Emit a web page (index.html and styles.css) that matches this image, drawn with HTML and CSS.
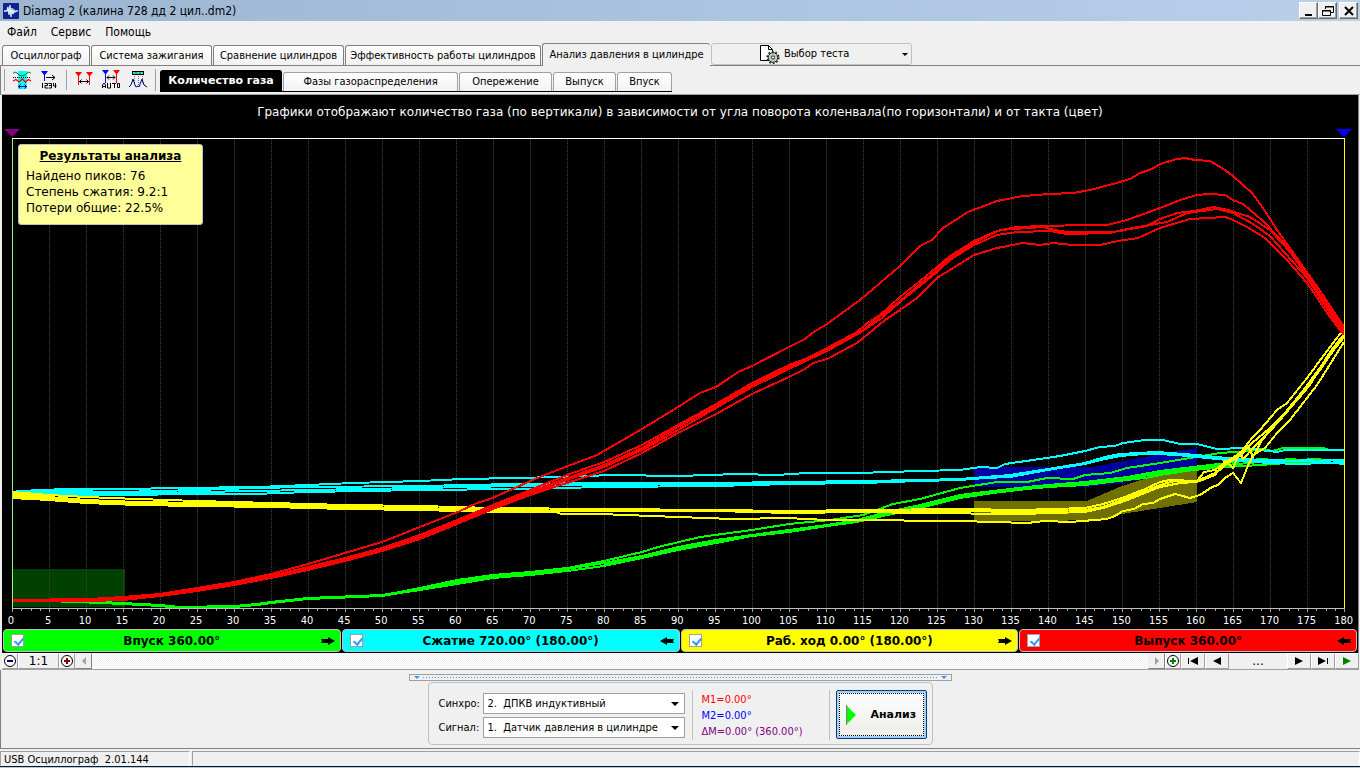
FILE: index.html
```html
<!DOCTYPE html>
<html lang="ru">
<head>
<meta charset="utf-8">
<title>Diamag 2 (калина 728 дд 2 цил..dm2)</title>
<link rel="stylesheet" href="styles.css">
</head>
<body>
<header class="titlebar">
  <svg class="app-icon" viewBox="0 0 16 16" width="16" height="16" aria-hidden="true"><rect width="16" height="16" rx="1" fill="#10248c"/><path d="M1 8h3l1-4 1 8 1-10 1 12 1-9 1 6 1-4 1 2 1-1h2" fill="none" stroke="#d6ecff" stroke-width="1.3"/></svg>
  <h1 class="title">Diamag 2 (калина 728 дд 2 цил..dm2)</h1>
  <div class="win-buttons">
    <button class="win-btn" aria-label="Свернуть"><svg viewBox="0 0 14 12" width="14" height="12"><path d="M3 9h7v2H3z"/></svg></button>
    <button class="win-btn" aria-label="Восстановить"><svg viewBox="0 0 14 12" width="14" height="12" fill="none" stroke="#000"><path d="M4.500 4V1.500h8v6H10M4 2h9M1.500 5.500h8v5h-8zM1 6h9"/></svg></button>
    <button class="win-btn win-close" aria-label="Закрыть"><svg viewBox="0 0 14 12" width="14" height="12"><path d="M3 2l8 8M11 2l-8 8" stroke="#000" stroke-width="2"/></svg></button>
  </div>
</header>

<nav class="menu">
  <button class="menu-item">Файл</button>
  <button class="menu-item">Сервис</button>
  <button class="menu-item">Помощь</button>
</nav>

<nav class="tabs" aria-label="Режимы">
  <button class="tab tab-s">Осциллограф</button>
  <button class="tab tab-m">Система зажигания</button>
  <button class="tab tab-l">Сравнение цилиндров</button>
  <button class="tab tab-xl">Эффективность работы цилиндров</button>
  <button class="tab tab-active">Анализ давления в цилиндре</button>
  <button class="test-picker">
    <svg viewBox="0 0 21 20" width="21" height="20" aria-hidden="true"><path d="M1.500 1.500h8l4 4v11h-12z" fill="#fff" stroke="#000"/><path d="M9.500 1.500v4h4" fill="none" stroke="#000"/><circle cx="14" cy="13.500" r="4.800" fill="#bccfbc" stroke="#222"/><circle cx="14" cy="13.500" r="5.800" fill="none" stroke="#222" stroke-width="1.600" stroke-dasharray="1.800 1.840"/><circle cx="14" cy="13.500" r="1.600" fill="#fff" stroke="#222"/></svg>
    <span>Выбор теста</span>
    <i class="caret"></i>
  </button>
</nav>

<div class="toolbar">
  <div class="tools">
    <button class="tool" aria-label="Наложение"><svg viewBox="0 0 20 20" width="20" height="20"><path d="M6 1h9v18H6z" fill="#0ff"/><path d="M1 3.500l2-1.500 2 1 2 2 3 1 3-1 2-2 2-1 2 1.500" fill="none" stroke="#008000"/><path d="M1 7.500h18" stroke="#000" stroke-dasharray="1 1"/><path d="M1 11l3-1.500 3 2.500 3.500-3 3 3 3-2.500 2.500 1.500" fill="none" stroke="red" stroke-width="1.300"/><path d="M6 16.500h9M8.500 14.500l-2 2 2 2M12.500 14.500l2 2-2 2" stroke="#000080" fill="none"/></svg></button>
    <button class="tool" aria-label="Нумерация"><svg viewBox="0 0 20 20" width="20" height="20"><path d="M2 1h7L6 5v6H5V5z" fill="#00f"/><path d="M7 7.500h9M13 5l3 2.500L13 10" fill="none" stroke="#000"/><path d="M3.500 13v5M5.500 13.500h3v2h-2.500v2.500h3M9.500 13.500h3v4.500h-3M10 15.500h2M14.500 13v3h3M16.500 13v5" fill="none" stroke="#000"/></svg></button>
    <button class="tool tool-sep" aria-label="Маркеры"><svg viewBox="0 0 20 20" width="20" height="20"><path d="M1 2h7L5 6v9H4V6zM12 2h7l-3 4v9h-1V6z" fill="red"/><path d="M4.500 5v10M15.500 5v10" stroke="red"/><path d="M5 11.500h10M7.500 9.500l-2 2 2 2M12.500 9.500l2 2-2 2" fill="none" stroke="#000"/></svg></button>
    <button class="tool" aria-label="Автоматические маркеры"><svg viewBox="0 0 20 20" width="20" height="20"><path d="M1 0h7L5 4v9H4V4z" fill="#00f"/><path d="M12 0h7l-3 4v9h-1V4z" fill="red"/><path d="M6 7.500h8M8 5.500l-2 2 2 2M12 5.500l2 2-2 2M1.500 18v-3l1.500-2 1.500 2v3M1.500 16.500h3M6.500 13v5h3v-5M11 13.500h4M13.500 13.500V18M16.500 13.500h2v4h-2z" fill="none" stroke="#000"/></svg></button>
    <button class="tool" aria-label="Результаты"><svg viewBox="0 0 20 20" width="20" height="20"><path d="M4 1h12v4H4z"/><path d="M5 2h10v2H5z" fill="#0fc"/><path d="M8 2v2M12 2v2" stroke="red"/><path d="M6.500 6v7M10.500 6v10M14.500 6v7" stroke="#777" stroke-dasharray="1 1"/><path d="M1 17l2-2 2-6 2 6 1 2 2-1 1 1 3-8 2 6 3 2" fill="none" stroke="#000080"/></svg></button>
  </div>
  <nav class="subtabs" aria-label="Графики">
    <button class="subtab subtab-active">Количество газа</button>
    <button class="subtab sub-l">Фазы газораспределения</button>
    <button class="subtab sub-m">Опережение</button>
    <button class="subtab sub-s">Выпуск</button>
    <button class="subtab sub-xs">Впуск</button>
  </nav>
</div>

<main class="chart">
  <p class="caption">Графики отображают количество газа (по вертикали) в зависимости от угла поворота коленвала(по горизонтали) и от такта (цвет)</p>
  <div class="markers"><i class="marker marker-a"></i><i class="marker marker-b"></i></div>
  <div class="plot">
    <svg class="plot-svg" viewBox="12 138 1333 474" preserveAspectRatio="none" role="img" aria-label="Количество газа по углу поворота">
      <g class="zones">
        <path fill="#004000" d="M12 569H125V607H12z"/>
      </g>
      <path class="grid" d="M49.500 139V608M86.500 139V608M123.500 139V608M160.500 139V608M197.500 139V608M234.500 139V608M271.500 139V608M308.500 139V608M345.500 139V608M382.500 139V608M419.500 139V608M456.500 139V608M493.500 139V608M530.500 139V608M567.500 139V608M604.500 139V608M641.500 139V608M678.500 139V608M715.500 139V608M752.500 139V608M789.500 139V608M826.500 139V608M863.500 139V608M900.500 139V608M937.500 139V608M974.500 139V608M1011.500 139V608M1048.500 139V608M1085.500 139V608M1122.500 139V608M1159.500 139V608M1196.500 139V608M1233.500 139V608M1270.500 139V608M1307.500 139V608"/>
      <g class="zones">
        <path fill="#0000a0" d="M974 467H1093L1140 458L1173 452L1197 448V470L1160 476L1122 483L1087 487H974z"/>
        <path fill="#707000" d="M974 501H1087L1122 486L1160 474L1197 470V502L1160 508L1122 514L1100 520L974 522z"/>
      </g>
      <g class="curve" stroke="#00ff00">
        <polyline points="12,600 77,601 123,603 160,605 180,607 234,606 257,604 271,602 308,598 382,595 400,592 420,588 457,580 493,575 530,572 567,568 604,561 642,552 658,547 700,537 752,530 789,524 830,520 863,515 893,504 920,499 960,488 997,482 1027,482 1047,478 1073,479 1085,475 1110,473 1127,468 1160,463 1190,458 1220,453 1250,451 1260,449 1273,451 1283,448 1323,448 1330,450 1344,450"/>
        <polyline points="12,601 77,601 123,603 160,605 180,607 234,607 257,604 271,602 308,598 382,596 400,592 420,589 457,582 493,576 530,573 567,569 604,563 642,556 678,547 716,540 752,535 789,530 827,525 857,520 883,513 920,505 960,495 993,491 1027,487 1048,485 1085,482 1127,477 1160,471 1193,467 1227,463 1260,459 1290,461 1313,459 1344,461"/>
        <polyline points="12,600 77,602 123,604 160,606 180,608 234,607 257,605 271,603 308,599 382,596 400,593 420,590 457,584 493,578 530,575 567,571 604,566 642,558 678,550 716,543 752,536 789,532 827,526 857,522 883,516 920,508 960,498 993,493 1027,489 1048,487 1085,485 1127,480 1145,478 1160,475 1193,470 1227,467 1260,465 1300,462 1344,463"/>
        <polyline points="604,565 642,557 678,549 716,542 752,535 789,531 827,526 857,521 883,515 920,506 960,497 1027,488 1085,484 1127,479 1160,473 1193,468 1227,465 1260,462 1290,459 1344,464"/>
      </g>
      <g class="curve" stroke="#00ffff">
        <polyline points="12,492 20,491 65,489 120,489 183,488 257,487 308,485 353,483 420,481 463,479 515,478 560,477 613,475 678,476 738,474 777,475 807,473 857,473 920,471 960,470 980,467 997,468 1005,464 1033,460 1060,456 1085,451 1100,447 1115,446 1123,443 1145,440 1163,440 1180,444 1197,444 1217,449 1243,448 1277,452 1285,450 1344,450"/>
        <polyline points="12,493 65,491 120,492 197,490 254,488 308,487 420,486 515,484 604,483 716,483 789,482 863,481 920,480 960,479 985,477 1010,475 1048,469 1085,463 1105,457 1120,454 1157,452 1197,455 1237,459 1270,460 1300,461 1344,460"/>
        <polyline points="12,494 65,493 120,494 197,492 254,491 308,490 420,488 515,486 604,485 716,484 789,483 863,482 920,481 960,480 985,478 1010,477 1048,470 1085,464 1105,459 1120,456 1157,453 1197,457 1237,461 1270,463 1300,464 1344,462"/>
        <polyline points="12,495 65,495 120,495 197,494 254,494 308,492 420,490 515,489 604,487 716,486 789,484 863,483 920,481 960,479 1010,476 1048,470 1085,463 1120,455 1157,454 1197,456 1237,460 1270,462 1310,460 1344,464"/>
      </g>
      <g class="curve" stroke="#ffff00">
        <polyline points="12,492 49,495 86,497 138,499 197,501 271,503 345,505 420,506 493,508 604,509 716,510 789,511 863,510 960,509 1020,510 1085,508 1103,504 1122,498 1145,489 1160,482 1170,480 1197,481 1204,472 1215,470 1226,462 1240,453 1252,438 1260,430 1277,410 1287,403 1307,378 1330,347 1343,330"/>
        <polyline points="12,494 49,497 86,500 138,502 197,503 271,505 345,507 420,508 493,510 604,511 716,511 789,512 863,512 960,511 1020,512 1085,510 1103,507 1122,500 1145,491 1160,485 1175,481 1197,481 1215,473 1226,464 1240,456 1252,443 1270,428 1300,397 1320,370 1344,335"/>
        <polyline points="12,496 49,499 86,502 138,504 197,505 271,507 345,508 420,510 493,511 604,511 716,511 789,513 863,512 920,513 1020,514 1085,512 1103,508 1122,502 1145,493 1160,487 1180,483 1197,482 1215,475 1225,461 1233,468 1240,452 1243,459 1255,446 1275,425 1302,392 1322,365 1344,337"/>
        <polyline points="12,498 49,500 86,503 138,505 197,506 271,507 345,509 420,510 493,512 555,512 562,514 600,514 678,517 733,519 787,518 827,520 887,520 920,521 960,521 1027,523 1045,521 1070,522 1107,519 1115,516 1123,511 1134,509 1143,504 1153,503 1160,499 1175,494 1190,498 1200,495 1212,487 1218,485 1225,478 1233,473 1241,483 1247,468 1253,455 1265,448 1277,433 1290,420 1300,407 1317,385 1344,342"/>
        <polyline points="1197,481 1215,474 1230,461 1248,446 1253,457 1262,440 1280,420 1310,385 1330,352 1344,334"/>
      </g>
      <g class="curve" stroke="#ff0000">
        <polyline points="12,600 90,599 123,597 160,594 197,588 234,582 271,574 308,564 345,553 382,542 420,527 460,511 477,503 490,499 508,491 535,479 560,469 597,455 642,429 678,407 700,393 716,387 728,379 738,372 752,366 789,347 805,339 812,333 827,324 860,300 900,266 920,246 932,240 943,228 968,212 997,201 1023,196 1050,194 1073,193 1090,190 1113,184 1130,179 1140,173 1152,169 1160,164 1177,159 1185,158 1195,160 1210,161 1222,168 1233,176 1252,193 1263,208 1277,230 1297,258 1323,295 1344,327"/>
        <polyline points="12,600 90,600 123,598 160,595 197,589 234,583 271,576 308,567 345,558 382,548 420,535 457,520 493,505 530,490 567,475 604,462 642,445 678,425 716,404 752,383 789,365 805,359 827,348 857,332 866,324 880,315 900,297 920,281 937,267 950,256 974,241 997,231 1017,227 1043,226 1087,225 1107,225 1127,220 1160,208 1183,199 1197,195 1210,194 1225,195 1233,200 1243,204 1263,221 1283,242 1300,265 1344,330"/>
        <polyline points="12,600 90,600 123,598 160,595 197,590 234,584 271,577 308,568 345,559 382,549 420,537 457,522 493,507 530,492 567,478 604,465 642,448 678,427 716,406 752,385 789,367 827,350 863,330 883,314 900,301 920,284 937,270 950,258 974,243 1000,230 1043,227 1055,230 1067,232 1113,232 1147,226 1160,219 1177,213 1195,211 1213,207 1228,210 1250,217 1270,230 1290,252 1307,276 1344,332"/>
        <polyline points="12,601 90,601 123,599 160,596 197,590 234,584 271,577 308,569 345,560 382,550 420,538 457,523 493,508 530,494 567,480 604,467 642,450 678,430 716,408 752,387 789,369 827,351 863,331 883,317 900,302 920,286 937,272 950,260 974,245 997,235 1017,232 1050,231 1067,234 1110,233 1127,229 1167,222 1187,213 1217,209 1233,213 1253,224 1270,236 1307,278 1344,335"/>
        <polyline points="12,601 90,601 123,600 160,596 197,591 234,585 271,578 308,570 345,561 382,551 420,539 457,524 493,509 530,495 567,483 604,471 642,453 678,433 716,414 752,394 789,377 805,369 813,363 827,359 857,343 885,320 900,310 917,298 937,278 974,255 997,248 1023,243 1040,245 1053,243 1073,245 1100,245 1118,241 1138,238 1160,228 1190,219 1225,217 1233,220 1247,227 1265,238 1287,260 1307,283 1330,317 1342,333"/>
      </g>
      <path stroke="#fff" d="M12 138.500H1345"/>
      <path stroke="#80ff80" d="M12.500 139V608"/>
      <path stroke="#ffff00" d="M1344.500 139V608"/>
      <path stroke="#c0c0c0" d="M12 608.500H1345"/>
      <path stroke="#a0a0a0" stroke-width="2" stroke-dasharray="1 8.250" d="M12 610H1345"/>
      <path stroke="#a0a0a0" stroke-width="3" stroke-dasharray="1 36" d="M12 610.500H1345"/>
    </svg>
    <section class="results">
      <h2>Результаты анализа</h2>
      <p>Найдено пиков: 76</p>
      <p>Степень сжатия: 9.2:1</p>
      <p>Потери общие: 22.5%</p>
    </section>
  </div>
  <div class="axis">
    <span>0</span><span>5</span><span>10</span><span>15</span><span>20</span><span>25</span><span>30</span><span>35</span><span>40</span><span>45</span><span>50</span><span>55</span><span>60</span><span>65</span><span>70</span><span>75</span><span>80</span><span>85</span><span>90</span><span>95</span><span>100</span><span>105</span><span>110</span><span>115</span><span>120</span><span>125</span><span>130</span><span>135</span><span>140</span><span>145</span><span>150</span><span>155</span><span>160</span><span>165</span><span>170</span><span>175</span><span>180</span>
  </div>
  <div class="strokes">
    <label class="stroke stroke-in"><input type="checkbox" checked><span>Впуск 360.00°</span><svg viewBox="0 0 16 10" width="16" height="10"><path d="M1 3h7V1l7 4-7 4V7H1l1-2z"/></svg></label>
    <label class="stroke stroke-comp"><input type="checkbox" checked><span>Сжатие 720.00° (180.00°)</span><svg viewBox="0 0 16 10" width="16" height="10"><path d="M15 3H8V1L1 5l7 4V7h7l-1-2z"/></svg></label>
    <label class="stroke stroke-work"><input type="checkbox" checked><span>Раб. ход 0.00° (180.00°)</span><svg viewBox="0 0 16 10" width="16" height="10"><path d="M1 3h7V1l7 4-7 4V7H1l1-2z"/></svg></label>
    <label class="stroke stroke-out"><input type="checkbox" checked><span>Выпуск 360.00°</span><svg viewBox="0 0 16 10" width="16" height="10"><path d="M15 3H8V1L1 5l7 4V7h7l-1-2z"/></svg></label>
  </div>
</main>

<div class="scroller">
  <button class="nav-btn nav-xs" aria-label="Уменьшить"><svg viewBox="0 0 14 14" width="14" height="14"><circle cx="7" cy="7" r="5.500" fill="#fff" stroke="#000"/><path d="M4 6h6v2H4z" fill="#000080"/></svg></button>
  <button class="nav-btn nav-scale">1:1</button>
  <button class="nav-btn nav-xs" aria-label="Увеличить"><svg viewBox="0 0 14 14" width="14" height="14"><circle cx="7" cy="7" r="5.500" fill="#fff" stroke="#000"/><path d="M4 6h2V4h2v2h2v2H8v2H6V8H4z" fill="#800000"/></svg></button>
  <button class="nav-btn nav-scroll" aria-label="Прокрутить влево"><svg viewBox="0 0 8 8" width="8" height="8"><path d="M6 0v8L2 4z" fill="#a0a0a0"/></svg></button>
  <div class="track"></div>
  <button class="nav-btn nav-scroll" aria-label="Прокрутить вправо"><svg viewBox="0 0 8 8" width="8" height="8"><path d="M2 0v8l4-4z" fill="#a0a0a0"/></svg></button>
  <button class="nav-btn nav-xs" aria-label="Добавить"><svg viewBox="0 0 14 14" width="14" height="14"><circle cx="7" cy="7" r="5.500" fill="#fff" stroke="#000"/><path d="M4 6h2V4h2v2h2v2H8v2H6V8H4z" fill="#008000"/></svg></button>
  <button class="nav-btn nav-m" aria-label="В начало"><svg viewBox="0 0 12 8" width="12" height="8"><path d="M1 1h1v6H1zM11 0v8L3 4z"/></svg></button>
  <button class="nav-btn nav-m" aria-label="Назад"><svg viewBox="0 0 12 8" width="12" height="8"><path d="M10 0v8L2 4z"/></svg></button>
  <button class="nav-btn nav-dots">...</button>
  <button class="nav-btn nav-m" aria-label="Вперёд"><svg viewBox="0 0 12 8" width="12" height="8"><path d="M2 0v8l8-4z"/></svg></button>
  <button class="nav-btn nav-m" aria-label="В конец"><svg viewBox="0 0 12 8" width="12" height="8"><path d="M10 1h1v6h-1zM1 0v8l8-4z"/></svg></button>
  <button class="nav-btn nav-m" aria-label="Пуск"><svg viewBox="0 0 12 8" width="12" height="8"><path d="M2 0v8l8-4z" fill="#008000"/></svg></button>
</div>

<section class="dock">
  <div class="splitter"><i></i><b></b><i></i></div>
  <form class="panel">
    <div class="fields">
      <label for="sync">Синхро:</label>
      <div class="select"><select id="sync"><option>2.&nbsp; ДПКВ индуктивный</option></select></div>
      <label for="signal">Сигнал:</label>
      <div class="select"><select id="signal"><option>1.&nbsp; Датчик давления в цилиндре</option></select></div>
    </div>
    <div class="readout">
      <p class="m1">M1=0.00°</p>
      <p class="m2">M2=0.00°</p>
      <p class="dm">ΔM=0.00° (360.00°)</p>
    </div>
    <button type="button" class="analyze"><svg viewBox="0 0 10 20" width="10" height="20" aria-hidden="true"><path d="M0 0l10 10L0 20z" fill="#0f0"/><path d="M.5 0v20" stroke="#808080"/></svg><span>Анализ</span></button>
  </form>
</section>

<footer class="status">
  <span class="cell cell-version">USB Осциллограф&nbsp; 2.01.144</span>
  <span class="cell cell-rest"></span>
</footer>
<div class="taskbar"></div>
</body>
</html>
```
FILE: styles.css
```css
* { box-sizing: border-box; }

body {
  margin: 0;
  min-height: 100vh;
  display: flex;
  flex-direction: column;
  overflow: hidden;
  background: #f0f0f0;
  color: #000;
  font: 11px/14px "DejaVu Sans Condensed", "DejaVu Sans", sans-serif;
}

h1, h2, p { margin: 0; font-size: inherit; font-weight: normal; }
button { margin: 0; padding: 0; border: 0; background: none; color: inherit; font: inherit; white-space: nowrap; }
svg { display: block; flex: none; }

/* title bar and menu */
.titlebar { display: flex; align-items: center; height: 21px; padding: 0 2px 0 3px; background: linear-gradient(90deg, #9cb6d2, #b8d0ea); }
.title { flex: 1; padding-left: 4px; font-size: 12px; }
.win-buttons { display: flex; }
.win-btn { display: grid; place-items: center; width: 19px; height: 17px; background: #f0f0f0; border: 1px solid; border-color: #fff #696969 #696969 #fff; box-shadow: inset -1px -1px #a0a0a0; }
.win-close { margin-left: 2px; }
.menu { display: flex; gap: 14px; height: 21px; padding: 0 7px; align-items: center; font-size: 12px; }

/* main tabs */
.tabs { display: flex; align-items: flex-end; gap: 1px; height: 24px; padding-left: 2px; border-bottom: 1px solid #808080; }
.tab { height: 20px; border: 1px solid #808080; border-bottom: 0; border-radius: 3px 3px 0 0; background: linear-gradient(#fff, #f2f2f2); }
.tab-s { width: 88px; }
.tab-m { width: 121px; }
.tab-l { width: 131px; }
.tab-xl { width: 196px; }
.tab-active { width: 168px; height: 23px; margin-bottom: -1px; background: #f0f0f0; border-right: 0; }
.test-picker { display: flex; align-items: center; gap: 4px; width: 201px; height: 22px; padding: 0 3px 0 47px; border: 1px solid #c0c0c0; border-radius: 3px; }
.caret { margin-left: auto; border: 3px solid transparent; border-top-color: #000; border-bottom: 0; }

/* tool buttons and chart tabs */
.toolbar { display: flex; height: 29px; padding-left: 3px; border-bottom: 1px solid #a0a0a0; border-left: 1px solid #808080; flex: none; }
.tools { display: flex; align-items: center; gap: 7px; height: 22px; margin: 3px 0; padding: 0 7px; border: solid #a0a0a0; border-width: 0 1px; }
.tool-sep { position: relative; margin-left: 8px; }
.tool-sep::before { content: ""; position: absolute; left: -8px; top: 0; height: 20px; border-left: 1px solid #a0a0a0; }
.subtabs { display: flex; align-items: flex-end; gap: 1px; height: 26px; padding: 0 0 1px; margin-left: 4px; background: linear-gradient(#000, #000) bottom / 100% 1px no-repeat; }
.subtab { height: 19px; border: 1px solid #a0a0a0; border-bottom: 0; border-radius: 3px 3px 0 0; background: linear-gradient(#fff, #f2f2f2); }
.subtab-active { width: 122px; height: 21px; background: #000; border-color: #000; color: #fff; font-family: "DejaVu Sans", sans-serif; font-weight: bold; }
.sub-l { width: 175px; }
.sub-m { width: 93px; }
.sub-s { width: 63px; }
.sub-xs { width: 55px; }

/* chart */
.chart { flex: 1; display: flex; flex-direction: column; margin: 0 1px 0 2px; border-right: 1px solid #808080; background: #000; color: #fff; font-family: "DejaVu Sans", sans-serif; }
.caption { padding-top: 9px; height: 34px; text-align: center; font-size: 12px; line-height: 16px; }
.markers { display: flex; justify-content: space-between; height: 9px; padding: 0 6px 0 2px; }
.marker { border: 8px solid transparent; border-bottom: 0; }
.marker-a { border-top-color: #800080; }
.marker-b { border-top-color: #0000ff; }
.plot { position: relative; flex: 1; min-height: 0; margin: 0 13px 0 10px; }
.plot-svg { position: absolute; inset: 0; width: 100%; height: 100%; shape-rendering: crispEdges; }
.grid { fill: none; stroke: #404040; stroke-width: 1px; stroke-dasharray: 1 1; }
.curve { fill: none; stroke-width: 2px; }
.results { position: absolute; left: 6px; top: 6px; width: 185px; height: 81px; padding: 3px 7px; border: 1px solid #c0c0c0; border-radius: 3px; background: #ffff99; color: #000; font-size: 12px; line-height: 16px; }
.results h2 { margin-bottom: 4px; text-align: center; font-weight: bold; text-decoration: underline; }
.axis { display: flex; justify-content: space-between; height: 17px; margin: 0 14px 0 9px; padding-top: 1px; font: 11px/16px "DejaVu Sans Condensed", "DejaVu Sans", sans-serif; }
.axis span { display: flex; justify-content: center; width: 0; }
.strokes { display: grid; grid-template-columns: repeat(4, 1fr); gap: 1px; padding: 0 1px 1px 1px; }
.stroke { display: flex; align-items: center; height: 23px; padding: 0 4px 0 7px; border: 1px solid #c0c0c0; border-radius: 4px; color: #000; font-size: 12px; font-weight: bold; }
.stroke span { flex: 1; text-align: center; }
.stroke-in { background: #00ff00; }
.stroke-comp { background: #00ffff; }
.stroke-work { background: #ffff00; }
.stroke-out { background: #ff0000; }
.stroke input { appearance: none; position: relative; width: 13px; height: 13px; margin: 0; border: 1px solid #a0a0a0; background: #fff; }
.stroke input:checked::after { content: ""; position: absolute; left: 4px; top: 1px; width: 4px; height: 7px; border: solid #3399ff; border-width: 0 2px 2px 0; transform: rotate(40deg); }

/* zoom and playback row */
.scroller { display: flex; height: 17px; margin: 0 1px 0 2px; border-bottom: 1px solid #a0a0a0; }
.nav-btn { display: grid; place-items: center; height: 16px; border: 1px solid; border-color: #fff #a0a0a0 #a0a0a0 #fff; background: #f0f0f0; font: 12px/14px "DejaVu Sans", sans-serif; }
.nav-xs { width: 16px; }
.nav-scale { width: 41px; }
.nav-scroll { width: 17px; border-color: #f0f0f0 #808080 #808080 #f0f0f0; }
.nav-m { width: 24px; }
.nav-dots { width: 58px; border-color: #f0f0f0; }
.track { flex: 1; background: repeating-conic-gradient(#f0f0f0 0 25%, #fff 0 50%) 0 0 / 2px 2px; }

/* lower dock */
.dock { display: flex; flex-direction: column; align-items: center; height: 79px; padding: 4px 1px 0 0; border-bottom: 1px solid #808080; border-left: 1px solid #808080; }
.splitter { display: flex; align-items: center; gap: 3px; width: 543px; height: 7px; padding: 0 4px; border: 1px solid #a0a0a0; }
.splitter i { border: 3px solid transparent; border-top-color: #3399ff; border-bottom: 0; }
.splitter b { flex: 1; height: 1px; background: repeating-linear-gradient(90deg, #3399ff 0 1px, transparent 1px 3px); }
.panel { display: flex; align-items: center; width: 505px; height: 63px; margin-top: 1px; padding: 2px 4px 0 10px; border: 1px solid #c0c0c0; border-radius: 4px; }
.fields { display: grid; grid-template-columns: 44px 202px; row-gap: 3px; align-items: center; align-content: center; width: 253px; padding-top: 2px; }
.select { position: relative; height: 21px; }
.select::after { content: ""; position: absolute; right: 6px; top: 9px; border: 4px solid transparent; border-top-color: #000; border-bottom: 0; pointer-events: none; }
.select select { appearance: none; width: 100%; height: 100%; margin: 0; padding: 0 20px 0 4px; border: 1px solid #a0a0a0; border-radius: 0; background: #fff; color: #000; font: inherit; }
.readout { width: 138px; padding: 2px 0 0 9px; border: solid #c0c0c0; border-width: 0 1px; line-height: 16px; }
.m1 { color: #ff0000; }
.m2 { color: #0000ff; }
.dm { color: #800080; }
.analyze { display: flex; align-items: center; gap: 15px; width: 91px; height: 49px; margin-left: 6px; padding: 0 9px; border: 1px solid #003c74; border-radius: 2px; box-shadow: inset 0 0 0 2px #a8d0f4; outline: 1px dotted #000; outline-offset: -4px; background: linear-gradient(#fff, #ececE6); font-family: "DejaVu Sans", sans-serif; font-weight: bold; }

/* status bar */
.status { display: flex; gap: 2px; height: 17px; padding-top: 2px; }
.cell { height: 15px; border: 1px solid; border-color: #a0a0a0 #fff #f0f0f0 #a0a0a0; padding-left: 3px; line-height: 15px; }
.cell-version { width: 190px; }
.cell-rest { flex: 1; }
.taskbar { height: 2px; border-top: 1px solid #101820; background: #b0c8e0; flex: none; }
```
